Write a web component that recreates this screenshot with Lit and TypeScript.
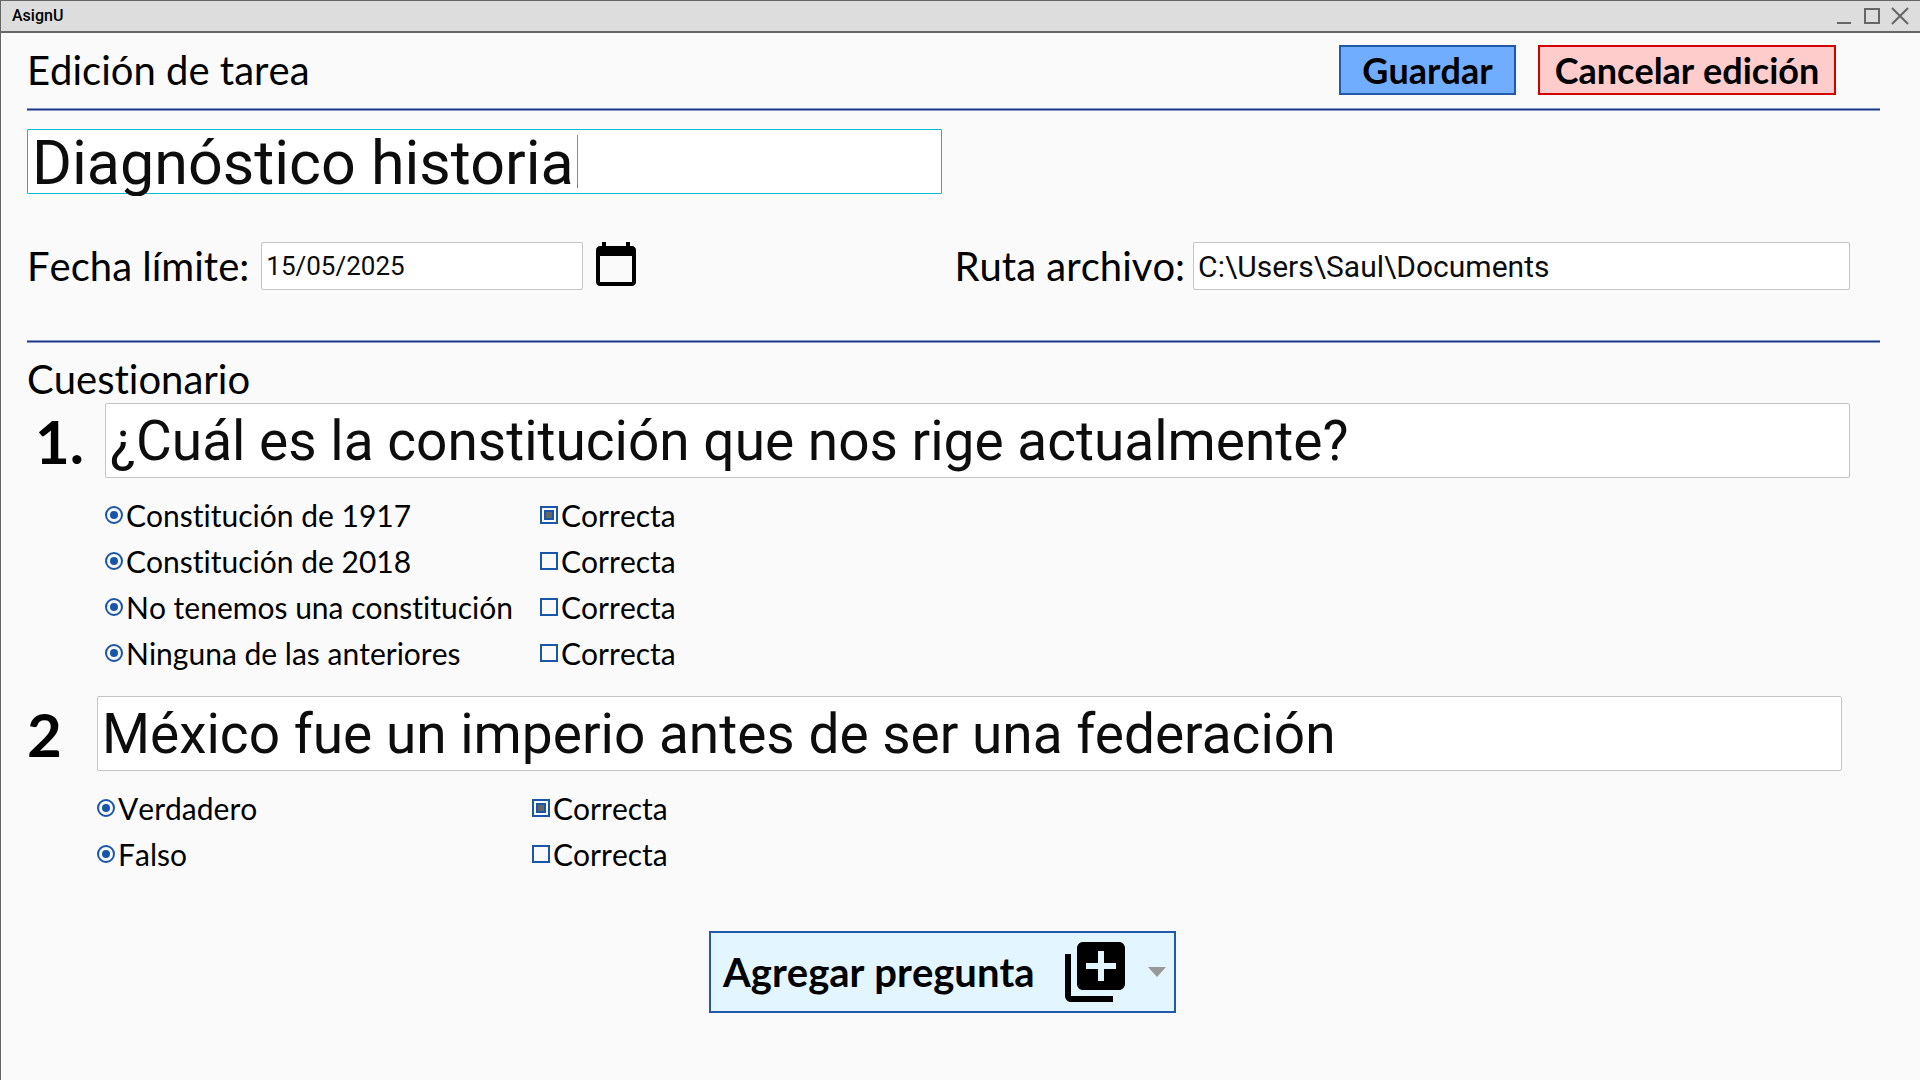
import { LitElement, html, css } from "lit";
import { customElement, property } from "lit/decorators.js";

interface Option { text: string; correct: boolean; }
interface Question { label: string; text: string; options: Option[]; shifted: boolean; }

const questions: Question[] = [
  {
    label: "1.",
    text: "¿Cuál es la constitución que nos rige actualmente?",
    shifted: false,
    options: [
      { text: "Constitución de 1917", correct: true },
      { text: "Constitución de 2018", correct: false },
      { text: "No tenemos una constitución", correct: false },
      { text: "Ninguna de las anteriores", correct: false },
    ],
  },
  {
    label: "2",
    text: "México fue un imperio antes de ser una federación",
    shifted: true,
    options: [
      { text: "Verdadero", correct: true },
      { text: "Falso", correct: false },
    ],
  },
];

@customElement("question-block")
class QuestionBlock extends LitElement {
  @property({ attribute: false }) question!: Question;
  @property({ type: Number }) index = 0;

  static styles = css`
    :host { display: block; }
    *, *::before { box-sizing: border-box; }
    .row { display: grid; grid-template-columns: 70px 1fr; align-items: center; padding-left: 8px; }
    .shifted .row { padding-left: 0; }
    .number { font-size: 60px; line-height: 72px; font-weight: 700; }
    .text {
      width: 100%; height: 75px; padding: 0 4px; border: 1px solid #c4c4c4; border-radius: 2px;
      background: #fff; color: #0d0d0d; font: 400 55px/72px Roboto, sans-serif; outline: none;
    }
    .options { display: grid; gap: 10px; margin: 19px 0 0; padding: 0 0 0 78px; list-style: none; }
    .shifted .options { padding-left: 70px; }
    .option { display: grid; grid-template-columns: 435px auto; justify-content: start; }
    .choice { display: flex; align-items: center; gap: 3px; font-size: 30px; line-height: 36px; white-space: nowrap; }
    .choice input {
      appearance: none; flex: none; display: grid; place-content: center;
      width: 18px; height: 18px; margin: 0; border: 2px solid #1a56a8;
    }
    .choice input[type="radio"] { border-radius: 50%; }
    .choice input[type="radio"]::before { content: ""; width: 8px; height: 8px; border-radius: 50%; background: #1a56a8; }
    .choice input:checked[type="checkbox"]::before { content: ""; width: 10px; height: 10px; border: 2px solid #1a56a8; background: #666; }
  `;

  render() {
    const q = this.question;
    const name = `pregunta-${this.index}`;
    return html`
      <section class=${q.shifted ? "shifted" : ""}>
        <div class="row">
          <label class="number" for="text">${q.label}</label>
          <input class="text" id="text" type="text" .value=${q.text} />
        </div>
        <ul class="options">
          ${q.options.map((o) => html`
            <li class="option">
              <label class="choice"><input type="radio" name=${name} />${o.text}</label>
              <label class="choice"><input type="checkbox" .checked=${o.correct} />Correcta</label>
            </li>`)}
        </ul>
      </section>`;
  }
}

@customElement("app-root")
class AppRoot extends LitElement {
  static styles = css`
    :host {
      display: block; color: #000; font-family: Lato, "Liberation Sans", sans-serif;
      font-kerning: none; font-variant-ligatures: none;
    }
    * { box-sizing: border-box; }
    .window { min-height: 100vh; background: #fafafa; border-left: 1px solid #666; }
    .titlebar {
      display: flex; align-items: center; justify-content: space-between; height: 33px; padding: 0 10px 0 11px;
      border-top: 1px solid #666; border-bottom: 2px solid #666; background: #ddd;
      font: 500 16px/20px Roboto, sans-serif;
    }
    .controls { display: flex; gap: 8px; }
    .controls button { display: grid; padding: 0; border: 0; background: none; }
    .page { padding: 0 40px 0 26px; }
    .header { display: flex; align-items: center; gap: 22px; height: 75px; padding: 0 44px 1px 0; }
    .header h1 { flex: 1; }
    h1, h2 { margin: 0; font-size: 40px; line-height: 48px; font-weight: 400; }
    hr { height: 3px; margin: 0; border: solid #8796c8; border-width: 1px 0; background: #21397c; }
    button { font-family: inherit; font-kerning: none; font-variant-ligatures: none; color: #000; }
    .action { min-width: 177px; height: 50px; padding: 0 12px; border: 2px solid #1f5baa; background: #70adff; font-size: 36px; line-height: 44px; font-weight: 700; }
    .cancel { min-width: 298px; border-color: #d40000; background: #ffcccc; }
    .title {
      position: relative; width: 50%; max-width: 915px; height: 65px; margin-top: 18px;
      border: 1px solid #00bcd4; border-radius: 1px; background: #fff;
    }
    .title input {
      display: block; width: 100%; height: 66px; margin: 0; padding: 0 4px; border: 0; outline: none; background: none;
      color: #0d0d0d; font: 400 61px/66px Roboto, sans-serif;
    }
    .caret { position: absolute; left: 549px; top: 5px; width: 1px; height: 53px; background: #00bcd4; }
    .fields { display: grid; grid-template-columns: calc(50% + 16px) 1fr; align-items: center; margin: 46px 30px 48px 0; }
    .field { display: flex; align-items: center; font-size: 40px; line-height: 48px; }
    .field input {
      height: 48px; padding: 0 4px; border: 1px solid #c4c4c4; border-radius: 2px; background: #fff;
      color: #0d0d0d; font: 400 30px/40px Roboto, sans-serif; outline: none;
    }
    .field .date { width: 322px; margin-left: 12px; font-size: 26px; }
    .field .path { flex: 1; min-width: 0; margin-left: 8px; }
    .calendar { display: grid; margin: 0 0 4px 9px; padding: 0; border: 0; background: none; }
    .quiz { margin-right: 30px; padding-top: 12px; }
    .shifted { margin: 25px 8px 0 0; }
    .footer { display: flex; justify-content: center; padding: 59px 22px 0 0; }
    .add {
      display: flex; align-items: center; width: 467px; height: 82px; padding: 0 8px 0 12px;
      border: 2px solid #1f5baa; background: #e3f5ff; font-size: 40px; line-height: 48px; font-weight: 700;
    }
    .stack { margin-left: auto; }
    .arrow { margin-left: 17px; }
  `;

  render() {
    return html`
      <div class="window">
        <header class="titlebar">
          <span>AsignU</span>
          <div class="controls">
            <button aria-label="Minimizar"><svg width="20" height="18" viewBox="0 0 20 18"><path d="M3 16h14" stroke="#666" stroke-width="2" /></svg></button>
            <button aria-label="Maximizar"><svg width="20" height="18" viewBox="0 0 20 18"><path d="M3 2h14v14H3z" fill="none" stroke="#666" stroke-width="2" /></svg></button>
            <button aria-label="Cerrar"><svg width="20" height="18" viewBox="0 0 20 18"><path d="M2 1l16 16M18 1L2 17" stroke="#666" stroke-width="2" /></svg></button>
          </div>
        </header>
        <main class="page">
          <div class="header">
            <h1>Edición de tarea</h1>
            <button class="action">Guardar</button>
            <button class="action cancel">Cancelar edición</button>
          </div>
          <hr />
          <div class="title">
            <input type="text" aria-label="Título de la tarea" .value=${"Diagnóstico historia"} />
            <span class="caret"></span>
          </div>
          <div class="fields">
            <div class="field">
              <label for="date">Fecha límite:</label>
              <input class="date" id="date" type="text" .value=${"15/05/2025"} />
              <button class="calendar" aria-label="Elegir fecha">
                <svg width="48" height="48" viewBox="0 0 24 24"><path d="M20 3h-1V1h-2v2H7V1H5v2H4c-1.100 0-2 .9-2 2v16c0 1.100.9 2 2 2h16c1.100 0 2-.9 2-2V5c0-1.100-.9-2-2-2zm0 18H4V8h16v13z" /></svg>
              </button>
            </div>
            <div class="field">
              <label for="path">Ruta archivo:</label>
              <input class="path" id="path" type="text" .value=${"C:\\Users\\Saul\\Documents"} />
            </div>
          </div>
          <hr />
          <div class="quiz">
            <h2>Cuestionario</h2>
            ${questions.map((q, i) => html`<question-block class=${q.shifted ? "shifted" : ""} .question=${q} .index=${i}></question-block>`)}
          </div>
          <div class="footer">
            <button class="add">
              Agregar pregunta
              <svg class="stack" width="72" height="72" viewBox="0 0 24 24"><path d="M4 6H2v14c0 1.100.9 2 2 2h14v-2H4V6zm16-4H8c-1.100 0-2 .9-2 2v12c0 1.100.9 2 2 2h12c1.100 0 2-.9 2-2V4c0-1.100-.9-2-2-2zm-1 9h-4v4h-2v-4H9V9h4V5h2v4h4v2z" /></svg>
              <svg class="arrow" width="18" height="10" viewBox="0 0 18 10"><path d="M0 0h18l-9 10z" fill="#999" /></svg>
            </button>
          </div>
        </main>
      </div>`;
  }
}
